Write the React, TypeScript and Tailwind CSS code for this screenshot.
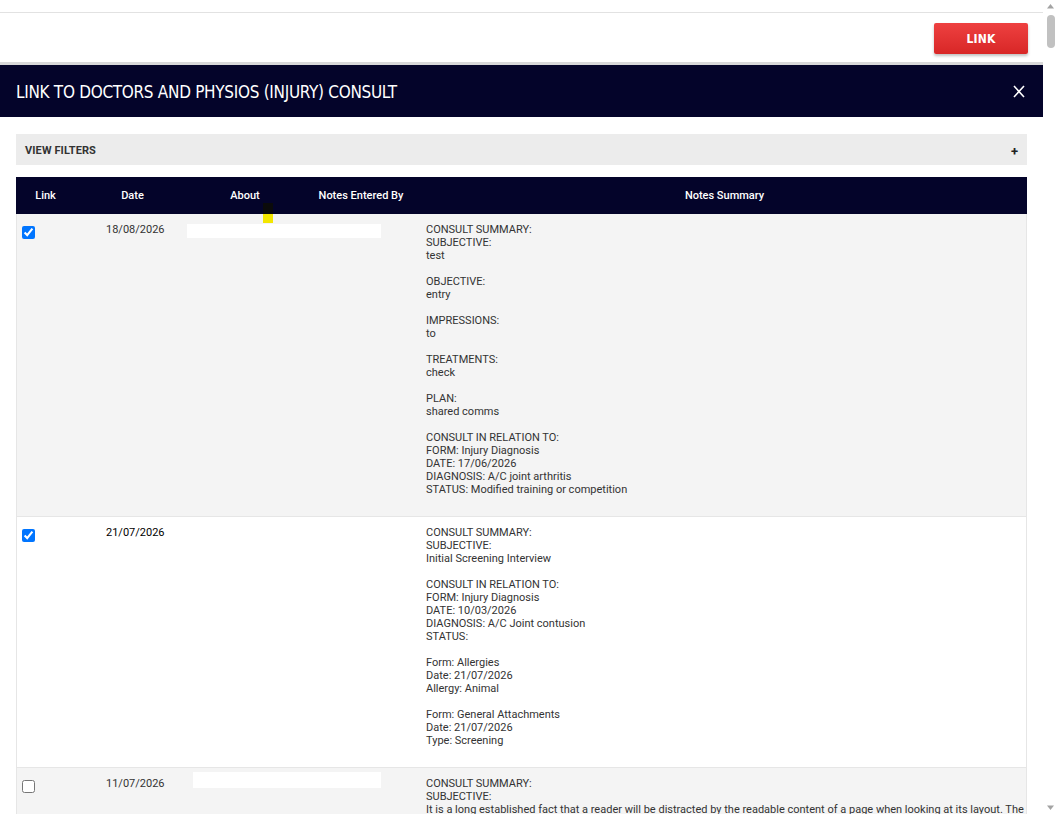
import React from "react";

const body = "font-['Roboto','Liberation_Sans',sans-serif]";

type Row = {
  checked: boolean;
  date: string;
  dateDark?: boolean;
  box?: boolean;
  bg: string;
  lines: string[];
};

const rows: Row[] = [
  {
    checked: true,
    date: "18/08/2026",
    box: true,
    bg: "bg-[#f4f4f4]",
    lines: [
      "CONSULT SUMMARY:",
      "SUBJECTIVE:",
      "test",
      "",
      "OBJECTIVE:",
      "entry",
      "",
      "IMPRESSIONS:",
      "to",
      "",
      "TREATMENTS:",
      "check",
      "",
      "PLAN:",
      "shared comms",
      "",
      "CONSULT IN RELATION TO:",
      "FORM: Injury Diagnosis",
      "DATE: 17/06/2026",
      "DIAGNOSIS: A/C joint arthritis",
      "STATUS: Modified training or competition",
      "",
    ],
  },
  {
    checked: true,
    date: "21/07/2026",
    dateDark: true,
    bg: "bg-white",
    lines: [
      "CONSULT SUMMARY:",
      "SUBJECTIVE:",
      "Initial Screening Interview",
      "",
      "CONSULT IN RELATION TO:",
      "FORM: Injury Diagnosis",
      "DATE: 10/03/2026",
      "DIAGNOSIS: A/C Joint contusion",
      "STATUS:",
      "",
      "Form: Allergies",
      "Date: 21/07/2026",
      "Allergy: Animal",
      "",
      "Form: General Attachments",
      "Date: 21/07/2026",
      "Type: Screening",
      "",
    ],
  },
  {
    checked: false,
    date: "11/07/2026",
    box: true,
    bg: "bg-[#f4f4f4]",
    lines: [
      "CONSULT SUMMARY:",
      "SUBJECTIVE:",
      "It is a long established fact that a reader will be distracted by the readable content of a page when looking at its layout. The point of using Lorem Ipsum is that it has a more-or-less normal distribution of letters, as opposed to using 'Content here, content here', making it look like readable English.",
      "",
      "OBJECTIVE:",
      "entry",
      "",
    ],
  },
];

function Scrollbar() {
  return (
    <div className="w-[15px] h-[814px] bg-white flex flex-col items-center shrink-0">
      <svg width="15" height="13" viewBox="0 0 15 13" className="shrink-0">
        <path d="M4 8.5 L7.5 4 L11 8.5 Z" fill="#a3a3a3" />
      </svg>
      <div className="w-[8px] h-[33px] mt-[2px] rounded-[4px] bg-[#c1c1c1]" />
      <div className="flex-1" />
      <svg width="15" height="13" viewBox="0 0 15 13" className="shrink-0">
        <path d="M4 4.5 L7.5 9 L11 4.5 Z" fill="#a3a3a3" />
      </svg>
    </div>
  );
}

export default function App() {
  return (
    <div className={`${body} bg-white h-[814px] overflow-hidden flex text-[#333]`}>
      <div className="flex-1 min-w-0 overflow-hidden">
        {/* top strip */}
        <div className="h-[12px] bg-white" />
        <div className="border-t border-[#e2e2e2] h-[50px] flex items-start justify-end pr-[15px] pt-[10px]">
          <button className="w-[94px] h-[31px] bg-gradient-to-b from-[#ee4040] to-[#d82626] rounded-[2px] shadow-[0_2px_3px_rgba(0,0,0,0.25)] text-white text-[12px] font-bold font-['Liberation_Sans_Narrow','DejaVu_Sans_Condensed',sans-serif] tracking-[0.2px]">
            LINK
          </button>
        </div>
        <div className="h-[3px] bg-[#d9d9d9]" />
        {/* modal header */}
        <div className="h-[52px] bg-[#04042a] flex items-center justify-between pl-[16px] pr-[17px]">
          <h1 className="text-white text-[17px] font-['Liberation_Sans_Narrow','DejaVu_Sans_Condensed',sans-serif] tracking-[-0.3px] pt-[4px]">
            LINK TO DOCTORS AND PHYSIOS (INJURY) CONSULT
          </h1>
          <svg width="14" height="13" viewBox="0 0 14 13" className="mt-[1px]">
            <path d="M2 1 L12 12 M12 1 L2 12" stroke="white" strokeWidth="1.6" fill="none" />
          </svg>
        </div>
        {/* content */}
        <div className="px-[16px] pt-[17px]">
          <div className="h-[31px] bg-[#ececec] flex items-center justify-between pl-[9px] pr-[9px] pt-[4px]">
            <span className="text-[11px] font-bold text-[#333] tracking-[0.1px]">VIEW FILTERS</span>
            <span className="text-[13px] font-bold text-[#222] leading-none">+</span>
          </div>
          <div className="mt-[12px] relative">
            {/* header */}
            <div className="grid grid-cols-[59px_115px_110px_122px_1fr] h-[37px] pt-[2px] bg-[#04042a] text-white text-[11px] font-medium items-center text-center">
              <div>Link</div>
              <div>Date</div>
              <div>About</div>
              <div>Notes Entered By</div>
              <div>Notes Summary</div>
            </div>
            {/* marker */}
            <div className="absolute left-[247px] top-[26px] w-[10px] flex flex-col">
              <div className="h-[11px] bg-[#0b0b0b]" />
              <div className="h-[9px] bg-[#f3e600]" />
            </div>
            {rows.map((r, i) => (
              <div
                key={i}
                className={`grid grid-cols-[59px_115px_110px_122px_1fr] ${r.bg} border-x border-[#e6e6e6] ${i > 0 ? "border-t" : ""} text-[11px] leading-[13px]`}
              >
                <div className="pl-[5px] pt-[12px]">
                  <input type="checkbox" checked={r.checked} readOnly className="w-[13px] h-[13px] m-0 block" />
                </div>
                <div className={`pt-[9px] pl-[30px] ${r.dateDark ? "text-black" : "text-[#333]"}`}>{r.date}</div>
                <div className="pt-[10px]">
                  {r.box && (
                    <div className={`${i === 2 ? "ml-[2px] w-[188px] h-[16px] mt-[-6px]" : "ml-[-4px] w-[194px] h-[14px]"} bg-white`} />
                  )}
                </div>
                <div />
                <div className="pt-[9px] pb-[7px] pl-[3px] pr-0">
                  {r.lines.map((l, j) => (
                    <div key={j} className="min-h-[13px]">{l}</div>
                  ))}
                </div>
              </div>
            ))}
          </div>
        </div>
      </div>
      <Scrollbar />
    </div>
  );
}
